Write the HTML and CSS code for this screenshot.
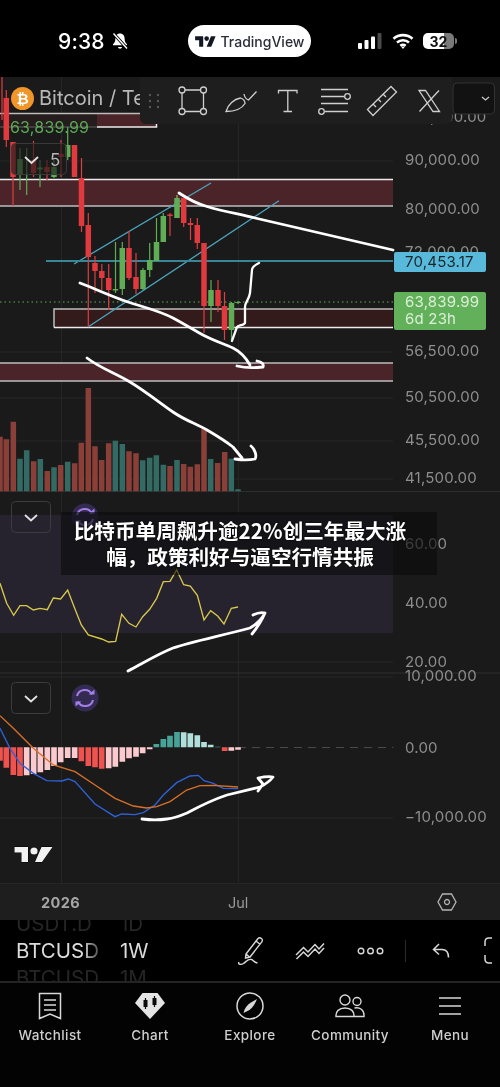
FILE: index.html
```html
<!DOCTYPE html>
<html lang="zh">
<head>
<meta charset="utf-8">
<title>TradingView</title>
<link rel="stylesheet" href="styles.css">
</head>
<body>
<div class="phone">
  <header class="status">
    <div class="status-left">
      <span class="time">9:38</span>
      <svg class="bell" viewBox="0 0 18 18" width="18" height="18"><path d="M9 1.500c-3 0-4.600 2.300-4.600 5 0 3.300-1.200 4.600-2.400 5.800v1h14v-1c-1.200-1.200-2.400-2.500-2.400-5.800 0-2.700-1.600-5-4.600-5ZM7 15h4c0 2.300-4 2.300-4 0Z" fill="#fff"/><path d="M2.500 1.500 16 16.500" stroke="#000" stroke-width="3.200"/><path d="M2.500 1.500 16 16.500" stroke="#fff" stroke-width="1.400"/></svg>
    </div>
    <div class="pill">
      <svg class="pill-logo" viewBox="0 0 36 26" width="21" height="15"><path d="M14 22H7V11H0V4h14v18zM28 22h-8l7.500-18h8L28 22z" fill="#131722"/><circle cx="20" cy="8" r="4" fill="#131722"/></svg>
      <span class="pill-text">TradingView</span>
    </div>
    <div class="status-right">
      <svg viewBox="0 0 25 16" width="25" height="16"><rect x="0" y="10" width="4" height="6" rx="1" fill="#fff"/><rect x="6.500" y="7" width="4" height="9" rx="1" fill="#fff"/><rect x="13" y="3.500" width="4" height="12.500" rx="1" fill="#fff"/><rect x="19.500" y="0" width="4" height="16" rx="1" fill="#4a4a4a"/></svg>
      <svg viewBox="0 0 22 16" width="22" height="16"><path d="M1.500 5.800C6.800.900 15.200.900 20.500 5.800M5 9.500c3.400-3 8.600-3 12 0M8.300 12.700c1.500-1.100 3.900-1.100 5.400 0" fill="none" stroke="#fff" stroke-width="2.600"/><path d="M11 16l-2-2.500h4z" fill="#fff"/></svg>
      <div class="battery"><span class="battery-num">32</span></div>
    </div>
  </header>

  <main class="chart">
    <svg class="canvas" viewBox="0 77 500 806" width="500" height="806">
      <!-- grid -->
      <path class="grid" d="M61.500 77V883M238.500 77V883M0 161H393M0 352H393M0 398H393M0 441H393M0 479H393M0 544H393M0 603H393M0 662H393M0 677H393M0 818H393"/>
      <path class="sep" d="M0 491.500H500M0 673H500"/>
      <rect class="rsi-band" x="0" y="515" width="393" height="118"/>

      <!-- zones -->
      <rect class="zone" x="0" y="113" width="156.500" height="14"/>
      <rect class="zone-dim" x="0" y="113" width="97" height="14"/>
      <path class="zone-line-soft" d="M0 113.500H140"/>
      <path class="zone-line" d="M97 127H156.500V113"/>
      <path class="zone-line-dim" d="M0 127H97"/>
      <rect class="zone" x="0" y="179" width="393" height="27"/>
      <path class="zone-line" d="M0 179.500H393"/>
      <path class="zone-line-soft" d="M0 206H393"/>
      <rect class="zone-dark" x="54" y="309" width="339" height="18.500"/>
      <path class="zone-line-soft" d="M393 309H54V327.500"/>
      <path class="zone-line" d="M54 327.500H393"/>
      <rect class="zone" x="0" y="363" width="393" height="18"/>
      <path class="zone-line-soft" d="M0 363H393M0 381H393"/>

      <!-- levels -->
      <path class="channel" d="M74 264 211 183M88 327 279 200.700"/>
      <path class="level" d="M46 261H393"/>
      <path class="last" d="M0 302H393"/>

      <!-- volume -->
      <g transform="translate(0 400) scale(.33333)">
        <path class="vol-red" d="M0 274V110M19 274V118M40 274V65M101 274V184M142 274V213M182 274V195M224 274V190M244 274V128M265 274V-36M285 274V139M305 274V180M326 274V130M387 274V154M408 274V160M510 274V198M551 274V192M571 274V200M592 274V193M612 274V85M653 274V189M674 274V156"/>
        <path class="vol-green" d="M60 274V176M80 274V151M121 274V177M162 274V202M203 274V185M346 274V122M367 274V132M428 274V181M449 274V173M469 274V166M490 274V194M531 274V180M632 274V177M694 274V176M714 274V268"/>
      </g>

      <!-- candles -->
      <path class="wick-red" d="M2 77V120M6.300 90V147M13 142V206M33.500 141V177M47 160V180M61 140V177M74.500 145V177M81.500 158V232M88.300 213V327M95 256V293M101.800 264V290M108.700 264V310M129 231V280M136 253V294M170 213V236M177 195V198M183.700 198V227M190.500 218V240M197.300 218V249M204 243V333M218 280V312M224.500 292V340"/>
      <path class="wick-green" d="M20 148V190M26.700 148V195M40 160V187M54 160V178M67.700 127V160M115.500 242V293M122.300 242V295M143 268V290M149.700 243V277M156.500 218V242M163.300 213V216M177 195V218M211 280V322M231.500 302V341M238 301V304"/>
      <path class="body-red" d="M6.300 98V140M13 142V177M33.500 160V173M47 167V172M61 154V157M74.500 145V177M81.500 178V226M88.300 225V257M95 263V271M101.800 271V278M108.700 278V290M129 248V278M136 277V289M170 214.500V216M183.700 198V223M190.500 223V225M197.300 225V243M204 243V306M218 290V306M224.500 306V330"/>
      <path class="body-green" d="M20 159V175M40 167.500V169.500M54 167V177M67.700 145V157M115.500 289V290.500M122.300 248V289M143 270V289M149.700 260V270M156.500 242V261M163.300 216V242M177 198V218M211 290V306M231.500 303V330M238 302V303"/>

      <!-- rsi -->
      <g transform="translate(0 490) scale(.33333)">
        <path class="rsi" d="M0 280 20 340 41 376 60 347 80 347 100 360 120 355 142 359 160 324 182 327 203 300 224 355 244 405 265 435 305 447 326 456 347 454 365 373 387 400 408 411 428 380 449 358 470 325 490 275 510 274 530 240 551 284 571 288 592 316 612 390 632 362 653 378 672 402 694 355 714 351"/>
      </g>

      <!-- macd -->
      <g transform="translate(0 670) scale(.33333)">
        <path class="zero" d="M714 232.500H1180"/>
        <path class="h-red" d="M0 232V272M19 232V293M40 232V315M60 232V318M244 232V274M265 232V288M285 232V292M305 232V296M674 232V243"/>
        <path class="h-pink" d="M80 232V316M101 232V312M121 232V307M142 232V300M162 232V288M182 232V277M203 232V264M224 232V264M326 232V295M346 232V290M367 232V275M387 232V265M408 232V260M428 232V250M449 232V238M694 232V242M714 232V239"/>
        <path class="h-teal" d="M469 232V222M490 232V207M510 232V197M531 232V186M653 232V230"/>
        <path class="h-pale" d="M551 232V187M571 232V190M592 232V196M612 232V216M632 232V224"/>
        <path class="macd-blue" d="M0 175 30 235 60 280 100 310 140 332 185 333 205 327 225 335 285 402 345 440 365 432 405 434 430 428 465 405 490 375 530 338 570 318 595 316 612 332 640 340 670 355 714 356"/>
        <path class="macd-orange" d="M0 137 40 175 100 235 160 285 225 305 285 345 345 385 400 408 440 414 470 410 510 395 560 360 600 347 640 346 714 351"/>
      </g>

      <!-- hand drawings -->
      <path class="ink" d="M179 193C188 199 198 204 207 206.500 225 212 240 214 255 218L393 250"/>
      <path class="ink" d="M80 283C98 290 113 297 128 302S160 311 173 318 192 329 203 335 225 344 233 348 246 358 250 365M237 366C245 368 255 368 263 367 264 364 262 362 257 361"/>
      <path class="ink" d="M87 358C100 368 115 373 130 382S160 403 173 412 197 424 207 430 224 440 233 447L242 458M235 459C242 460 250 460 255 459 257 456 255 449 251 446"/>
      <path class="ink thin" d="M259 263C255 265 252 267 252 270L250 293C249 300 245 302 245 307L245 323C243 326 238 325 237 327L233 338 232 341"/>
      <path class="ink" d="M128 671C145 662 158 654 173 648 190 642 220 636 250 628 257 624 262 619 265 613 261 612 257 613 253 615M265 613C262 620 257 628 252 634"/>
      <path class="ink" d="M142 819C150 820 160 820 167 819 175 818 180 816 187 813 200 806 212 800 227 795L260 787C266 784 270 781 273 777 268 776 263 777 258 778L263 784 258 791"/>

      <!-- axis labels -->
      <g class="axis">
        <text x="405" y="122">100,000.00</text>
        <text x="405" y="165">90,000.00</text>
        <text x="405" y="214">80,000.00</text>
        <text x="405" y="257">72,000.00</text>
        <text x="405" y="356">56,500.00</text>
        <text x="405" y="402">50,500.00</text>
        <text x="405" y="445">45,500.00</text>
        <text x="405" y="483">41,500.00</text>
        <text x="405" y="549">60.00</text>
        <text x="405" y="608">40.00</text>
        <text x="405" y="667">20.00</text>
        <text x="405" y="681">10,000.00</text>
        <text x="405" y="753">0.00</text>
        <text x="405" y="822">−10,000.00</text>
      </g>

      <!-- price tags -->
      <rect class="tag-blue" x="394" y="252" width="92" height="20" rx="2"/>
      <text class="tag-blue-text" x="405" y="266.500">70,453.17</text>
      <rect class="tag-green" x="394" y="292" width="92" height="38" rx="2"/>
      <text class="tag-green-text" x="405" y="307">63,839.99</text>
      <text class="tag-green-text" x="405" y="324">6d 23h</text>

      <!-- legend -->
      <circle class="coin" cx="22.500" cy="98.500" r="11.500"/>
      <text class="coin-b" x="22.500" y="103.500">₿</text>
      <text class="symbol" x="39" y="105">Bitcoin / Tether</text>
      <text class="legend-price" x="10" y="133">63,839.99</text>

      <rect class="collapse" x="11.500" y="143.500" width="55" height="31" rx="4"/>
      <path class="chev" d="M25 157l6.500 6 6.500-6"/>
      <text class="collapse-num" x="50" y="166">5</text>

      <!-- toolbar -->
      <rect class="select" x="453" y="83" width="41.500" height="31" rx="4"/>
      <path class="chev-small" d="M482 97l3.500 3 3.500-3"/>
      <path class="toolbar" d="M140 77H452V118a6 6 0 0 1-6 6H146a6 6 0 0 1-6-6Z"/>
      <path class="grip" d="M150 95h.01M158 95h.01M150 101h.01M158 101h.01M150 107h.01M158 107h.01"/>
      <g class="tool">
        <path d="M185 90h15.500M185 111.500h15.500M182 93v15.500M203.500 93v15.500"/>
        <circle cx="182" cy="90" r="3"/><circle cx="203.500" cy="90" r="3"/><circle cx="182" cy="111.500" r="3"/><circle cx="203.500" cy="111.500" r="3"/>
        <path d="M226 111.500c2-7 8-12.500 14.500-13.500 3 1 4.500 3 4.500 5.500-2.500 4-7 8-19 8ZM244 94c.5 3 2 5 4.500 6l8-8.500"/>
        <path d="M278.500 93.500V90.500H297V93.500M287.800 90.500V111M283.500 111.500H292"/>
        <path d="M321 89.500H348M321 96.500H344.500M321 103.500H348M325 111.500H348"/>
        <circle cx="347.500" cy="96.500" r="2.800"/><circle cx="321.500" cy="111.500" r="2.800"/>
        <path d="M367.500 109.500 391 86.500l5.500 5.500L373 115.500ZM373 104l3 3M378 99l3 3M383 94l3 3"/>
        <path d="M419 90.500h6.500L439.500 111.500h-6.500ZM439 90.500 419.500 111.500"/>
      </g>

      <!-- pane buttons -->
      <rect class="pane-btn" x="11.500" y="501.500" width="39" height="31" rx="4"/>
      <path class="chev" d="M25 515l6 5.500 6-5.500"/>
      <circle class="sync-bg" cx="85" cy="517" r="13.500"/>
      <g class="sync" transform="translate(85 517)">
        <path d="M-8-2A8 8 0 0 1 7-3.500M8 2A8 8 0 0 1-7 3.500"/>
        <path class="sync-head" d="M3.500-3.500H9.500V-8.500ZM-3.500 3.500H-9.500V8.500Z"/>
      </g>
      <rect class="pane-btn" x="11.500" y="682.500" width="39" height="31" rx="4"/>
      <path class="chev" d="M25 696l6 5.500 6-5.500"/>
      <circle class="sync-bg" cx="85" cy="698" r="13.500"/>
      <g class="sync" transform="translate(85 698)">
        <path d="M-8-2A8 8 0 0 1 7-3.500M8 2A8 8 0 0 1-7 3.500"/>
        <path class="sync-head" d="M3.500-3.500H9.500V-8.500ZM-3.500 3.500H-9.500V8.500Z"/>
      </g>

      <!-- watermark -->
      <g transform="translate(14 845)">
        <path class="wm" d="M14 17H7.500V7.500H.500V2H14ZM28 17H21L27.500 2H38.500Z"/>
        <circle class="wm" cx="20" cy="6" r="3.600"/>
      </g>
    </svg>
    <div class="headline">比特币单周飙升逾22%创三年最大涨幅，政策利好与逼空行情共振</div>
  </main>

  <div class="timeaxis">
    <span class="year">2026</span>
    <span class="month">Jul</span>
    <svg class="hex" viewBox="0 0 20 18" width="20" height="18"><path d="M5.500 1h9L19 9l-4.500 8h-9L1 9Z M10 6.500a2.500 2.500 0 1 0 .01 0Z" fill="none" stroke="#b5b5b5" stroke-width="1.300"/></svg>
  </div>

  <div class="controls">
    <div class="picker picker-symbol">
      <span class="faded">USDT.D</span>
      <span class="current fade-right">BTCUSD</span>
      <span class="faded">BTCUSD</span>
    </div>
    <div class="picker picker-interval">
      <span class="faded">1D</span>
      <span class="current">1W</span>
      <span class="faded">1M</span>
    </div>
    <div class="actions">
      <svg class="act act-pen" viewBox="0 0 28 30" width="28" height="30"><path d="M9 18 21 2.500c1-1 2.500-.8 3.500 0s1.200 2.300.3 3.400L13 21l-4.500 1ZM19 5l4 3.200M9 18l3.500 3M2 26c-1.500 2.500 2 3 4.500 1.500 3-2 4.500-5 8-4 2 .6 2 3 6 3.500" fill="none" stroke="#d8d8d8" stroke-width="1.400"/></svg>
      <svg class="act act-zig" viewBox="0 0 30 20" width="30" height="20"><path d="M1 14 8.500 6.500 13 11 20 3.500 24 8 29 2.500M1.500 18 8.500 11 13 15.500 20 8 24 12.500 29 7" fill="none" stroke="#d8d8d8" stroke-width="1.500"/></svg>
      <svg class="act act-dots" viewBox="0 0 27 8" width="27" height="8"><circle cx="4" cy="4" r="2.800" fill="none" stroke="#d8d8d8" stroke-width="1.400"/><circle cx="13.500" cy="4" r="2.800" fill="none" stroke="#d8d8d8" stroke-width="1.400"/><circle cx="23" cy="4" r="2.800" fill="none" stroke="#d8d8d8" stroke-width="1.400"/></svg>
      <span class="divider"></span>
      <svg class="act act-undo" viewBox="0 0 18 18" width="18" height="18"><path d="M7 2 1.500 7.500 7 12.500M2 7.500h8c4 0 6.500 2.500 6.500 8" fill="none" stroke="#d8d8d8" stroke-width="1.500"/></svg>
      <svg class="act act-bracket" viewBox="0 0 10 27" width="10" height="27"><path d="M9 1H6C3.500 1 2 2.500 2 5v4M9 26H6C3.500 26 2 24.500 2 22v-4" fill="none" stroke="#d8d8d8" stroke-width="1.500"/></svg>
    </div>
  </div>

  <nav class="tabs">
    <div class="tab">
      <svg viewBox="0 0 24 28" width="24" height="28"><path d="M1.500 1.500H22.500V26.500L12 22 1.500 26.500ZM6 8H18M6 13H18M6 18H18" fill="none" stroke="#d8d8d8" stroke-width="1.500"/></svg>
      <span>Watchlist</span>
    </div>
    <div class="tab">
      <svg viewBox="0 0 30 28" width="30" height="28"><path d="M7.500 1H22.500L30 11 15 27 0 11Z" fill="#e4e4e4"/><path d="M10.500 6V17M19.500 4V15" stroke="#0a0a0a" stroke-width="1.200"/><rect x="8.500" y="8" width="4" height="7" fill="#0a0a0a"/><rect x="17.500" y="6" width="4" height="7" fill="#0a0a0a"/></svg>
      <span>Chart</span>
    </div>
    <div class="tab">
      <svg viewBox="0 0 28 28" width="28" height="28"><circle cx="14" cy="14" r="13" fill="none" stroke="#d8d8d8" stroke-width="1.500"/><path d="M21 7C19.500 11 17 15.500 13.500 18L7.500 21C8.500 16 11.500 12.500 15 10.500Z" fill="#d8d8d8"/></svg>
      <span>Explore</span>
    </div>
    <div class="tab">
      <svg viewBox="0 0 30 24" width="30" height="24"><circle cx="10" cy="6" r="5" fill="none" stroke="#d8d8d8" stroke-width="1.400"/><circle cx="22" cy="7.500" r="4" fill="none" stroke="#d8d8d8" stroke-width="1.400"/><path d="M1 22.500c-.5-5 3-8.500 9-8.500s9.500 3.500 9 8.500ZM19.500 14c5-1 10 1.500 9.500 8.500H19" fill="none" stroke="#d8d8d8" stroke-width="1.400"/></svg>
      <span>Community</span>
    </div>
    <div class="tab">
      <svg viewBox="0 0 24 20" width="24" height="20"><path d="M1 2H23M1 10H23M1 18H23" fill="none" stroke="#d8d8d8" stroke-width="1.500"/></svg>
      <span>Menu</span>
    </div>
  </nav>
</div>
</body>
</html>
```

FILE: styles.css
```css
* { box-sizing: border-box; }
html, body { margin: 0; padding: 0; background: #000; }
body { font-family: Inter, "Noto Sans", sans-serif; }
.phone { width: 500px; height: 1087px; display: flex; flex-direction: column; overflow: hidden; background: #030303; filter: blur(.35px); }

.status { height: 77px; flex: none; background: #000; display: flex; align-items: center; position: relative; padding-top: 5px; }
.status-left { width: 188px; padding-left: 58px; display: flex; align-items: center; gap: 6px; }
.time { color: #fff; font-size: 21px; font-weight: 500; letter-spacing: .2px; }
.pill { width: 123px; height: 32px; background: #fff; border-radius: 16px; display: flex; align-items: center; justify-content: center; gap: 5px; }
.pill-text { color: #2a2e39; font-size: 14px; font-weight: 500; }
.pill-logo { display: block; }
.status-right { margin-left: 47px; display: flex; align-items: center; gap: 9px; }
.battery { width: 31px; height: 16px; border-radius: 5px; background: linear-gradient(90deg, #fff 0 68%, #7a7a7a 68%); display: flex; align-items: center; justify-content: center; position: relative; }
.battery::after { content: ""; position: absolute; left: 32px; top: 5px; width: 2px; height: 6px; border-radius: 0 2px 2px 0; background: #7a7a7a; }
.battery-num { color: #111; font-size: 14px; font-weight: 700; }

.chart { height: 806px; flex: none; position: relative; background: #1a1a1a; }
.canvas { display: block; }
.grid { stroke: #262626; stroke-width: 1; fill: none; }
.sep { stroke: #2e2e2e; stroke-width: 1; fill: none; }
.rsi-band { fill: #26232f; }
.zone { fill: #4a2428; }
.zone-dim { fill: #1a1a1a; opacity: .75; }
.zone-dark { fill: #331b1c; }
.zone-line { stroke: #ececec; stroke-width: 1.500; fill: none; }
.zone-line-soft { stroke: #bdbdbd; stroke-width: 1.500; fill: none; }
.zone-line-dim { stroke: #4a4a4a; stroke-width: 1.500; fill: none; }
.channel { stroke: #4ba6bd; stroke-width: 1.300; fill: none; }
.level { stroke: #3a8699; stroke-width: 2; fill: none; }
.last { stroke: #5fae55; stroke-width: 1; stroke-dasharray: 1.500 3; fill: none; }
.vol-red { stroke: #8a4039; stroke-width: 16.500; fill: none; }
.vol-green { stroke: #336b64; stroke-width: 16.500; fill: none; }
.wick-red { stroke: #dd3f44; stroke-width: 1.200; fill: none; }
.wick-green { stroke: #5fae55; stroke-width: 1.200; fill: none; }
.body-red { stroke: #e0393e; stroke-width: 5.500; fill: none; }
.body-green { stroke: #5fae55; stroke-width: 5.500; fill: none; }
.rsi { stroke: #d8c94c; stroke-width: 4; fill: none; }
.zero { stroke: #4a4a4a; stroke-width: 3; stroke-dasharray: 24 18; fill: none; }
.h-red { stroke: #ee5350; stroke-width: 17; fill: none; }
.h-pink { stroke: #fbcacf; stroke-width: 17; fill: none; }
.h-teal { stroke: #47a297; stroke-width: 17; fill: none; }
.h-pale { stroke: #b2dfdb; stroke-width: 17; fill: none; }
.macd-blue { stroke: #2f62d8; stroke-width: 4; fill: none; }
.macd-orange { stroke: #d8702a; stroke-width: 4; fill: none; }
.ink { stroke: #fff; stroke-width: 2.800; fill: none; stroke-linecap: round; stroke-linejoin: round; }
.ink.thin { stroke-width: 2.300; }
.axis text { fill: #8e8e8e; font-size: 15px; font-family: Inter, sans-serif; letter-spacing: .2px; }
.tag-blue { fill: #58b9da; }
.tag-blue-text { fill: #17262c; font-size: 15px; letter-spacing: .2px; }
.tag-green { fill: #63b05a; }
.tag-green-text { fill: #dcefd8; font-size: 15px; letter-spacing: .2px; }
.coin { fill: #f0952a; }
.coin-b { fill: #fff; font-size: 15px; font-weight: 700; text-anchor: middle; font-family: "DejaVu Sans", sans-serif; }
.symbol { fill: #b8b8b8; font-size: 20px; }
.legend-price { fill: #5da955; font-size: 16px; letter-spacing: .2px; }
.collapse { fill: #1a1a1a; fill-opacity: .65; stroke: #3a3a3a; }
.chev { stroke: #e2e2e2; stroke-width: 1.800; fill: none; }
.chev-small { stroke: #c8c8c8; stroke-width: 1.300; fill: none; }
.collapse-num { fill: #b8b8b8; font-size: 17px; }
.select { fill: #121212; stroke: #333; }
.toolbar { fill: #1e1e1e; }
.grip { stroke: #555; stroke-width: 2.400; stroke-linecap: round; fill: none; }
.tool path, .tool circle { stroke: #cfcfcf; stroke-width: 1.300; fill: none; }
.pane-btn { fill: none; stroke: #3c3c3c; }
.sync-bg { fill: #332b52; }
.sync path { stroke: #a37fe8; stroke-width: 2; fill: none; }
.sync .sync-head { fill: #a37fe8; stroke: none; }
.wm { fill: #f2f2f2; stroke: #000; stroke-width: 1; paint-order: stroke; }

.headline { position: absolute; left: 61px; top: 435px; width: 376px; height: 63px; padding: 5px 20px 0 2px; background: rgba(12, 12, 12, .62); color: #fff; font-family: "Noto Sans CJK SC", sans-serif; font-weight: 700; font-size: 20.600px; line-height: 26px; text-align: center; text-shadow: 0 0 2px #000; }

.timeaxis { height: 37px; flex: none; background: #1e1e1e; border-top: 1px solid #262626; position: relative; display: flex; align-items: center; padding-left: 41px; }
.year { color: #a6a6a6; font-size: 14.500px; font-weight: 700; letter-spacing: .4px; width: 187px; }
.month { color: #9a9a9a; font-size: 14.500px; width: 209px; }
.hex { display: block; }

.controls { height: 63px; flex: none; background: #000; border-bottom: 2px solid #242424; display: flex; position: relative; overflow: hidden; }
.picker { display: flex; flex-direction: column; justify-content: center; height: 61px; font-size: 20.500px; line-height: 27px; }
.picker span { flex: none; }
.picker-symbol { width: 120px; padding-left: 16px; flex: none; }
.picker-interval { width: 60px; flex: none; }
.current { color: #dcdcdc; white-space: nowrap; }
.fade-right { width: 83px; overflow: hidden; -webkit-mask-image: linear-gradient(90deg, #000 80%, rgba(0,0,0,.35)); mask-image: linear-gradient(90deg, #000 80%, rgba(0,0,0,.35)); }
.faded { color: #262626; white-space: nowrap; width: 83px; overflow: hidden; }
.actions { display: flex; align-items: center; flex: 1; padding-left: 57px; }
.act { display: block; flex: none; }
.act-zig { margin-left: 30px; }
.act-dots { margin-left: 32px; }
.divider { width: 1px; height: 22px; background: #2a2a2a; margin-left: 21px; flex: none; }
.act-undo { margin-left: 26px; }
.act-bracket { margin-left: 33px; }

.tabs { flex: 1; display: flex; background: #030303; padding-top: 8px; align-items: flex-start; }
.tab { width: 100px; height: 53px; display: flex; flex-direction: column; align-items: center; justify-content: flex-end; position: relative; }
.tab svg { position: absolute; left: 50%; top: 15px; transform: translate(-50%, -50%); }
.tab span { color: #cfcfcf; font-size: 13.500px; font-weight: 500; letter-spacing: .4px; line-height: 18px; }
```
